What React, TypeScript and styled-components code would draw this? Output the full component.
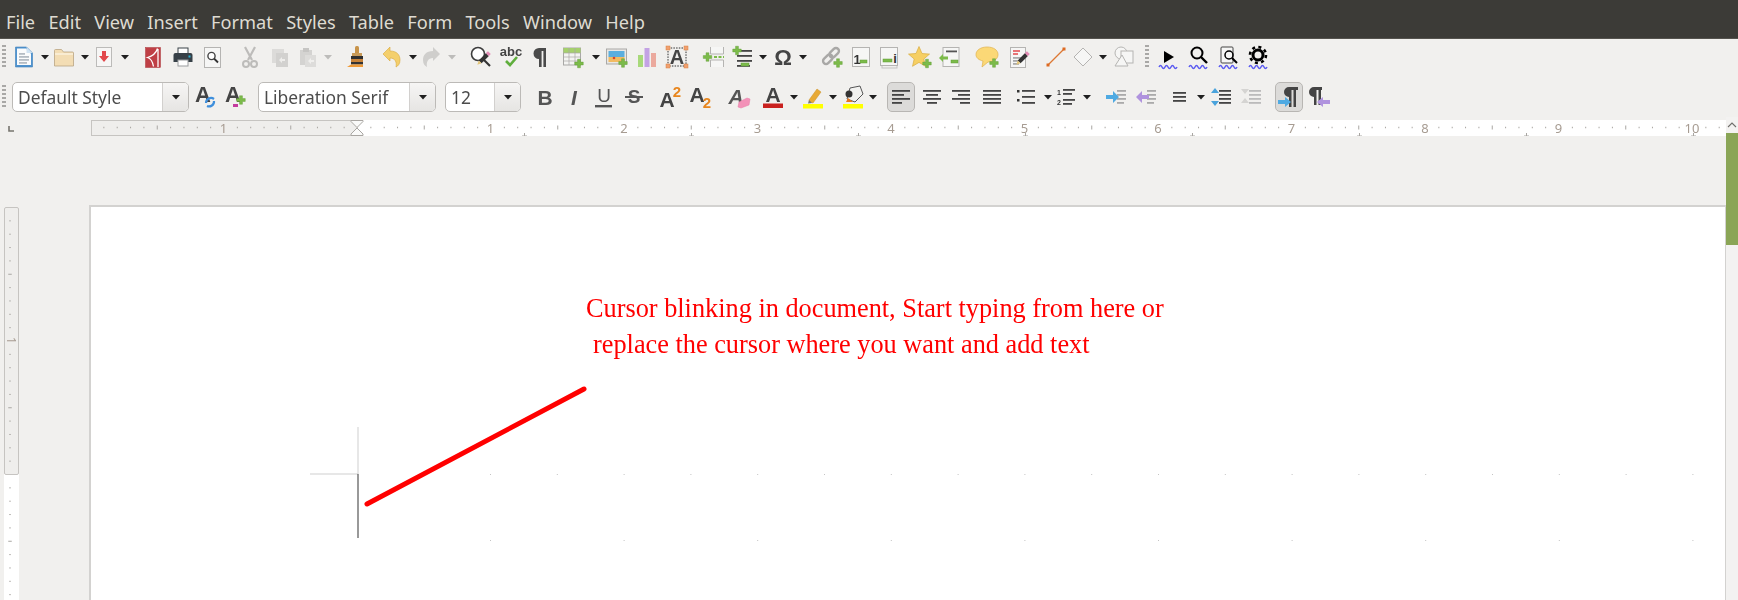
import React from 'react'
import styled, { createGlobalStyle } from 'styled-components'

const GlobalStyle = createGlobalStyle`
  html, body {
    margin: 0;
    padding: 0;
    background: #f1f0ee;
  }
`

const Window = styled.div`
  width: 1738px;
  height: 600px;
  overflow: hidden;
  display: flex;
  flex-direction: column;
  font-family: 'Noto Sans', sans-serif;
  filter: blur(0.4px);
`

const MenuBar = styled.div`
  height: 39px;
  flex: none;
  display: flex;
  align-items: center;
  padding: 5px 0 0 6px;
  box-sizing: border-box;
  background: #3c3b37;
  border-bottom: 1px solid #55534e;
`

const MenuItem = styled.span<{ $ml: number }>`
  margin-left: ${({ $ml }) => $ml}px;
  font-size: 18.2px;
  color: #dfdbd2;
`

const Toolbar = styled.div<{ $h: number; $pt?: number }>`
  height: ${({ $h }) => $h}px;
  padding-top: ${({ $pt }) => $pt || 0}px;
  box-sizing: border-box;
  flex: none;
  display: flex;
  align-items: center;
`

const Slot = styled.div<{ $ml: number; $w: number; $active?: boolean }>`
  flex: none;
  box-sizing: border-box;
  margin-left: ${({ $ml }) => $ml}px;
  width: ${({ $w }) => $w}px;
  height: ${({ $active }) => ($active ? '30px' : 'auto')};
  display: flex;
  align-items: center;
  justify-content: center;
  border-radius: 5px;
  background: ${({ $active }) => ($active ? '#dcdbd9' : 'transparent')};
  border: ${({ $active }) => ($active ? '1px solid #b8b6b3' : 'none')};
`

const Handle = styled.div<{ $h: number }>`
  width: 4px;
  height: ${({ $h }) => $h}px;
  background: repeating-linear-gradient(#a9a8a6 0 2px, transparent 2px 4px);
`

const Combo = styled.div`
  flex: 1;
  height: 30px;
  box-sizing: border-box;
  display: flex;
  background: #fff;
  border: 1px solid #bcbab7;
  border-radius: 5px;
  overflow: hidden;
`

const ComboText = styled.div`
  flex: 1;
  padding-left: 5px;
  font-size: 17.4px;
  line-height: 28px;
  color: #4c4c4c;
  white-space: nowrap;
`

const ComboButton = styled.div`
  width: 25px;
  flex: none;
  display: flex;
  align-items: center;
  justify-content: center;
  border-left: 1px solid #d2d0ce;
  background: linear-gradient(#f6f5f4, #e6e5e3);
`

const Main = styled.div`
  flex: 1;
  min-height: 0;
  display: flex;
`

const Content = styled.div`
  width: 1726px;
  flex: none;
  padding-top: 3px;
  box-sizing: border-box;
  display: flex;
  flex-direction: column;
`

const RulerRow = styled.div`
  height: 16px;
  flex: none;
  display: flex;
  align-items: flex-start;
  padding-left: 8px;
`

const Workspace = styled.div`
  flex: 1;
  min-height: 0;
  display: flex;
  align-items: flex-start;
  padding: 69px 0 0 4px;
  overflow: hidden;
`

const VRuler = styled.svg`
  flex: none;
  margin-top: 2px;
  display: block;
`

const Page = styled.div`
  position: relative;
  flex: 1;
  margin-left: 70px;
  height: 395px;
  box-sizing: border-box;
  padding: 84px 0 0 495px;
  background: #fff;
  border-top: 2px solid #d3d2d0;
  border-left: 2px solid #d3d2d0;
  border-right: 1px solid #d3d2d0;
`

const PageMarks = styled.svg`
  position: absolute;
  top: 0;
  left: 0;
`

const Note = styled.div<{ $indent?: number }>`
  position: relative;
  margin-left: ${({ $indent }) => $indent || 0}px;
  font-family: 'Liberation Serif', serif;
  font-size: 26.3px;
  line-height: 36px;
  color: #ff0000;
  white-space: nowrap;
`

const Scrollbar = styled.div`
  width: 12px;
  flex: none;
  display: flex;
  flex-direction: column;
  background: #f3f2f1;
`

const ScrollUp = styled.div`
  height: 16px;
  display: flex;
  align-items: center;
  justify-content: center;
`

const ScrollThumb = styled.div`
  height: 112px;
  background: #8aa556;
`

const IconSvg = styled.svg`
  display: block;
  overflow: visible;
`

const Icon = ({ children, size = 24 }: { children: React.ReactNode; size?: number }) => (
  <IconSvg width={size} height={size} viewBox="0 0 24 24">
    {children}
  </IconSvg>
)

const Plus = ({ x, y }: { x: number; y: number }) => (
  <path
    transform={`translate(${x} ${y}) scale(.85)`}
    d="M-1.7-5h3.4v3.3H5v3.4H1.7V5h-3.4V1.7H-5v-3.4h3.3z"
    fill="#7cbb4a"
    stroke="#5f9c38"
    strokeWidth=".5"
  />
)

const Minus = ({ x, y, w = 7 }: { x: number; y: number; w?: number }) => (
  <rect x={x} y={y} width={w} height="3" fill="#7cbb4a" stroke="#5f9c38" strokeWidth=".5" />
)

const Glyph = ({
  x,
  y,
  size,
  fill = '#444',
  bold = true,
  italic = false,
  children,
}: {
  x: number
  y: number
  size: number
  fill?: string
  bold?: boolean
  italic?: boolean
  children: React.ReactNode
}) => (
  <text
    x={x}
    y={y}
    fontSize={size}
    fill={fill}
    fontFamily="'Liberation Sans', sans-serif"
    fontWeight={bold ? 700 : 400}
    fontStyle={italic ? 'italic' : 'normal'}
    textAnchor="middle"
  >
    {children}
  </text>
)

const Lines = ({ rows, color = '#444' }: { rows: number[][]; color?: string }) => (
  <g fill={color}>
    {rows.map(([x, y, w], i) => (
      <rect key={i} x={x} y={y} width={w} height="1.8" />
    ))}
  </g>
)

const Wave = () => (
  <path
    d="M3 22q1.5-3 3 0t3 0 3 0 3 0 3 0 3 0"
    fill="none"
    stroke="#5a5af0"
    strokeWidth="1.5"
  />
)

const Pencil = ({ x, y }: { x: number; y: number }) => (
  <g transform={`translate(${x} ${y}) rotate(45)`}>
    <rect x="-2" y="-9" width="4" height="3" fill="#e38bb5" />
    <rect x="-2" y="-6" width="4" height="10" fill="#333" />
    <path d="M-2 4h4L0 8z" fill="#e4c67a" />
  </g>
)

const Arrow = ({ off }: { off?: boolean }) => (
  <svg width="8" height="6" viewBox="0 0 8 6">
    <path d="M0 1h8L4 5.5z" fill={off ? '#bdbcba' : '#1f1f1f'} />
  </svg>
)

const icons: Record<string, React.ReactNode> = {
  newDoc: (
    <>
      <path d="M3.5 2h11l6 6v14h-17z" fill="#4f93cf" stroke="#3f7fb8" strokeWidth=".6" />
      <path d="M5 3.5h9l5 5V20H5z" fill="#fafbfc" />
      <path d="M14.5 2v6h6z" fill="#cfe2f2" />
      <Lines color="#b5bcc4" rows={[[7, 8, 6], [7, 11, 10], [7, 14, 10], [7, 17, 8]]} />
    </>
  ),
  open: (
    <>
      <path d="M2.5 5.5q0-1 1-1h6l2 2.5h9q1 0 1 1V21h-19z" fill="#f3ddb4" stroke="#b9a583" strokeWidth=".8" />
      <path d="M3 9h18" stroke="#fdf6e6" strokeWidth="1.2" />
    </>
  ),
  save: (
    <>
      <rect x="4.5" y="2.5" width="15" height="19" fill="#f7f6f5" stroke="#bcbbb9" />
      <path d="M10 6h4v5h3l-5 6-5-6h3z" fill="#e2484b" />
    </>
  ),
  pdf: (
    <>
      <rect x="4.5" y="2.5" width="15" height="20" fill="#bf3f45" stroke="#a9363b" strokeWidth=".5" />
      <path d="M16.5 3.5c-1.5 5-5 7.5-10 9 3 1 5 3 6 9M17 4v18" fill="none" stroke="#fff" strokeWidth="1.3" />
    </>
  ),
  print: (
    <>
      <rect x="7" y="3" width="10" height="6" fill="#fff" stroke="#3b4349" />
      <path d="M2.5 10q0-2 2-2h15q2 0 2 2v7h-19z" fill="#374047" />
      <rect x="17.5" y="10.5" width="2" height="2" fill="#2bb3d6" />
      <rect x="7" y="15" width="10" height="6" fill="#fff" stroke="#9a9c9e" />
    </>
  ),
  preview: (
    <>
      <rect x="3.5" y="2.5" width="16" height="20" fill="#f6f6f5" stroke="#b5b4b2" />
      <circle cx="10.5" cy="11" r="3.6" fill="#fff" stroke="#444" strokeWidth="1.4" />
      <path d="M13 13.5l4 4" stroke="#333" strokeWidth="1.8" />
    </>
  ),
  cut: (
    <g fill="none" stroke="#bdbcba">
      <path d="M7 2l7 13M17 2l-7 13" strokeWidth="2.2" />
      <circle cx="8" cy="19" r="3" strokeWidth="2" />
      <circle cx="16" cy="19" r="3" strokeWidth="2" />
    </g>
  ),
  copy: (
    <>
      <rect x="4" y="4" width="12" height="14" fill="#dcdbd9" />
      <rect x="8" y="8" width="12" height="14" fill="#d2d1cf" />
      <path d="M11 15l3-3v2h3v2h-3v2z" fill="#eeedeb" />
    </>
  ),
  paste: (
    <>
      <rect x="4" y="5" width="12" height="15" fill="#d4d3d1" />
      <rect x="7" y="3" width="6" height="4" fill="#c6c5c3" />
      <rect x="9" y="10" width="11" height="12" fill="#dddcda" />
      <path d="M12 16l3-3v2h3v2h-3v2z" fill="#f0efed" />
    </>
  ),
  brush: (
    <>
      <rect x="10" y="1" width="4" height="8" rx="1.5" fill="#c8944a" />
      <rect x="7" y="8" width="10" height="3" fill="#c89a58" />
      <rect x="6" y="11" width="12" height="3" fill="#2f2f2f" />
      <rect x="6" y="14" width="12" height="3" fill="#c7833a" />
      <rect x="6" y="17" width="12" height="2.5" fill="#333" />
      <path d="M6 19.5h12v2.5H2z" fill="#ef9a37" />
    </>
  ),
  undo: (
    <path d="M3 9l7-7v4c7 0 10 4 10 9 0 4-2 6-4 7 1-5-1-9-6-9v3z" fill="#f4cf6c" stroke="#d9a83b" strokeWidth=".6" />
  ),
  redo: <path d="M21 9l-7-7v4C7 6 4 10 4 15c0 4 2 6 4 7-1-5 1-9 6-9v3z" fill="#cfcecc" />,
  find: (
    <>
      <circle cx="9" cy="9" r="6.5" fill="#fff" stroke="#3c3c3c" strokeWidth="1.6" />
      <path d="M13 13l8 8" stroke="#333" strokeWidth="2.2" />
      <Pencil x={14} y={14} />
    </>
  ),
  spell: (
    <>
      <Glyph x={12} y={11} size={13}>
        abc
      </Glyph>
      <path d="M7 16l4 4 7-8" fill="none" stroke="#5fae3c" strokeWidth="2.6" />
    </>
  ),
  para: (
    <path d="M17 3H10a5.5 5.5 0 0 0 0 11v8h2.6V6h1.8v16H17z" fill="#4a4a4a" />
  ),
  table: (
    <>
      <rect x="2.5" y="3" width="17" height="17" fill="#f4f4f2" stroke="#a9a8a6" />
      <rect x="2.5" y="3" width="17" height="5" fill="#a5d06c" />
      <path d="M8 3v17M14 3v17M2.5 8h17M2.5 12h17M2.5 16h17" stroke="#a9a8a6" strokeWidth=".7" />
      <Plus x={18} y={18.5} />
    </>
  ),
  image: (
    <>
      <rect x="1.5" y="4" width="20" height="15" fill="#e8e7e5" stroke="#a9a8a6" />
      <rect x="3.5" y="6" width="16" height="6" fill="#5aaede" />
      <rect x="3.5" y="12" width="16" height="5" fill="#f2bb62" />
      <circle cx="9" cy="13" r="1.3" fill="#d8452e" />
      <Plus x={18} y={18} />
    </>
  ),
  chart: (
    <>
      <rect x="3" y="10" width="5" height="12" fill="#a8d97a" />
      <rect x="9.5" y="3" width="5" height="19" fill="#c3a2e4" />
      <rect x="16" y="8" width="5" height="14" fill="#eba99d" />
    </>
  ),
  textbox: (
    <>
      <rect x="3" y="3" width="18" height="18" fill="none" stroke="#333" strokeDasharray="1.5 1.2" />
      <Glyph x={12} y={19} size={20}>
        A
      </Glyph>
      <g fill="#f0a070" stroke="#d98040" strokeWidth=".5">
        <rect x="1" y="1" width="4" height="4" />
        <rect x="19" y="1" width="4" height="4" />
        <rect x="1" y="19" width="4" height="4" />
        <rect x="19" y="19" width="4" height="4" />
      </g>
    </>
  ),
  pageBreak: (
    <>
      <path d="M8.5 2v7h13V2M8.5 22v-7h13v7" fill="#f6f6f5" stroke="#b5b4b2" />
      <path d="M12 12h10" stroke="#7cbb4a" strokeWidth="2" strokeDasharray="3 1.5" />
      <Plus x={5.5} y={12} />
    </>
  ),
  field: (
    <>
      <Lines rows={[[6, 5, 15], [6, 10, 15], [6, 15, 15], [6, 20, 13]]} />
      <Plus x={6} y={5.5} />
      <Minus x={10} y={18} w={8} />
    </>
  ),
  omega: (
    <Glyph x={12} y={20} size={22}>
      Ω
    </Glyph>
  ),
  link: (
    <>
      <g fill="none" stroke="#a9a8a6" strokeWidth="2.4" transform="rotate(-45 11 11)">
        <rect x="1" y="8" width="11" height="6" rx="3" />
        <rect x="10" y="8" width="11" height="6" rx="3" />
      </g>
      <Plus x={18} y={18} />
    </>
  ),
  footnote: (
    <>
      <rect x="3.5" y="2.5" width="17" height="19" fill="#f6f6f5" stroke="#b5b4b2" />
      <Glyph x={8} y={19} size={13} fill="#333">
        1
      </Glyph>
      <Minus x={11} y={15} />
    </>
  ),
  endnote: (
    <>
      <rect x="3" y="5" width="15" height="18" fill="#f0efed" stroke="#c4c3c1" />
      <rect x="1.5" y="2.5" width="17" height="18" fill="#f6f6f5" stroke="#b5b4b2" />
      <Minus x={4} y={14} w={9} />
      <Glyph x={16} y={18} size={13} fill="#333">
        i
      </Glyph>
    </>
  ),
  bookmark: (
    <>
      <path d="M10 1.5l3 7 7.5.6-5.7 4.9 1.7 7.3-6.5-3.9-6.5 3.9 1.7-7.3-5.7-4.9 7.5-.6z" fill="#f6cf63" stroke="#d9ac3d" strokeWidth=".7" />
      <Plus x={18} y={18.5} />
    </>
  ),
  crossRef: (
    <>
      <rect x="5" y="2.5" width="16" height="19" fill="#f6f6f5" stroke="#b5b4b2" />
      <rect x="8" y="5.5" width="11" height="1.8" fill="#555" />
      <path d="M1 13l4-4v2.5h5v3H5V17z" fill="#7cbb4a" />
      <Minus x={13} y={15} />
    </>
  ),
  comment: (
    <>
      <path d="M11 2c6.5 0 11 3 11 7.5S18 17 12 17l-6 5 1-6C3 15 0 13 0 9.500 0 5 5 2 11 2z" fill="#fbd876" stroke="#dfb04a" strokeWidth=".7" />
      <Plus x={18} y={18} />
    </>
  ),
  track: (
    <>
      <rect x="3.5" y="2.5" width="15" height="20" fill="#f6f6f5" stroke="#b5b4b2" />
      <path d="M6 6h7M6 9h5" stroke="#e2484b" strokeWidth="1.5" />
      <Lines color="#aaa" rows={[[6, 12, 9], [6, 15, 7], [6, 18, 6]]} />
      <Pencil x={15} y={14} />
    </>
  ),
  line: (
    <>
      <path d="M4 20L20 4" stroke="#dd7733" strokeWidth="1.3" />
      <rect x="2.500" y="18.5" width="3" height="3" fill="#dd6a22" />
      <rect x="18.5" y="2.5" width="3" height="3" fill="#dd6a22" />
    </>
  ),
  diamond: <path d="M12 3l9 9-9 9-9-9z" fill="#f6f6f5" stroke="#b5b4b2" />,
  shapes: (
    <>
      <circle cx="9" cy="8" r="6" fill="#f6f6f5" stroke="#b5b4b2" />
      <rect x="9" y="6" width="12" height="12" fill="#f6f6f5" stroke="#b5b4b2" />
      <path d="M10 10l6 11H3z" fill="#f6f6f5" stroke="#b5b4b2" />
    </>
  ),
  play: (
    <>
      <path d="M8 6l10 6-10 6z" fill="#000" />
      <Wave />
    </>
  ),
  search: (
    <>
      <circle cx="11" cy="8" r="5.5" fill="none" stroke="#000" strokeWidth="2" />
      <path d="M15 12l6 6" stroke="#000" strokeWidth="2.4" />
      <Wave />
    </>
  ),
  docSearch: (
    <>
      <rect x="5" y="2" width="12" height="16" rx="1" fill="#f6f6f5" stroke="#444" />
      <circle cx="13" cy="10" r="4" fill="none" stroke="#000" strokeWidth="1.5" />
      <path d="M16 13l5 5" stroke="#000" strokeWidth="2" />
      <Wave />
    </>
  ),
  gear: (
    <>
      <circle cx="12" cy="10" r="5" fill="none" stroke="#000" strokeWidth="3" />
      <circle cx="12" cy="10" r="8" fill="none" stroke="#000" strokeWidth="2.6" strokeDasharray="3 3.3" />
      <Wave />
    </>
  ),
  styleUpdate: (
    <>
      <Glyph x={9} y={17} size={22}>
        A
      </Glyph>
      <path d="M12 18a5 5 0 0 1 8-4M20 16a5 5 0 0 1-7 5" fill="none" stroke="#3f8fdc" strokeWidth="2.2" />
    </>
  ),
  styleNew: (
    <>
      <Glyph x={9} y={17} size={22}>
        A
      </Glyph>
      <rect x="9" y="19" width="5" height="3" fill="#c43b9e" />
      <Plus x={17} y={15} />
    </>
  ),
  bold: (
    <Glyph x={12} y={19.500} size={21} fill="#555">
      B
    </Glyph>
  ),
  italic: (
    <Glyph x={12} y={19.500} size={21} fill="#555" italic>
      I
    </Glyph>
  ),
  underline: (
    <>
      <Glyph x={12} y={17} size={19} fill="#555" bold={false}>
        U
      </Glyph>
      <rect x="3" y="20" width="17" height="2.4" fill="#555" />
    </>
  ),
  strike: (
    <>
      <Glyph x={12} y={18} size={19} fill="#555">
        S
      </Glyph>
      <rect x="3" y="11" width="18" height="2" fill="#555" />
    </>
  ),
  sup: (
    <>
      <Glyph x={9} y={22} size={21}>
        A
      </Glyph>
      <Glyph x={19} y={12} size={15} fill="#e8861e">
        2
      </Glyph>
    </>
  ),
  sub: (
    <>
      <Glyph x={9} y={17} size={21}>
        A
      </Glyph>
      <Glyph x={19} y={23} size={15} fill="#e8861e">
        2
      </Glyph>
    </>
  ),
  clear: (
    <>
      <Glyph x={9} y={19} size={21} fill="#555" italic>
        A
      </Glyph>
      <path d="M12 17l8-4 3 1-1 6-8 3-3-1z" fill="#f392b8" stroke="#e678a4" strokeWidth=".5" />
    </>
  ),
  fontColor: (
    <>
      <Glyph x={12} y={17} size={21}>
        A
      </Glyph>
      <rect x="2" y="18.5" width="20" height="4.5" fill="#c9211e" />
    </>
  ),
  highlight: (
    <>
      <path d="M8 15L16 4l4 3-8 11-3-1z" fill="#e8aa36" stroke="#c98f24" strokeWidth=".5" />
      <path d="M8 15l3 3-4 .5z" fill="#777" />
      <rect x="2" y="19" width="20" height="4.500" fill="#ffff00" />
    </>
  ),
  paraColor: (
    <>
      <path d="M9 3l10-2 3 8-8 8-8-3z" fill="#f2f2f0" stroke="#555" />
      <circle cx="8" cy="9" r="3.5" fill="#333" />
      <path d="M7 13l5 4H5z" fill="#e8761e" />
      <rect x="2" y="19" width="20" height="4.500" fill="#ffff00" />
    </>
  ),
  alignLeft: <Lines rows={[[3, 5, 18], [3, 9, 12], [3, 13, 18], [3, 17, 10]]} />,
  alignCenter: <Lines rows={[[3, 5, 18], [6, 9, 12], [3, 13, 18], [7, 17, 10]]} />,
  alignRight: <Lines rows={[[3, 5, 18], [9, 9, 12], [3, 13, 18], [11, 17, 10]]} />,
  justify: <Lines rows={[[3, 5, 18], [3, 9, 18], [3, 13, 18], [3, 17, 18]]} />,
  bullets: (
    <>
      <Lines rows={[[8, 5, 13], [8, 11, 13], [8, 17, 13]]} />
      <rect x="3" y="5" width="2.500" height="2.500" fill="#333" />
      <rect x="3" y="14" width="2.500" height="2.500" fill="#333" />
    </>
  ),
  numbers: (
    <>
      <Lines rows={[[9, 4, 12], [9, 8, 9], [9, 14, 12], [9, 18, 9]]} />
      <Glyph x={5} y={10} size={7} fill="#333">
        1
      </Glyph>
      <Glyph x={5} y={20} size={7} fill="#333">
        2
      </Glyph>
    </>
  ),
  indentMore: (
    <>
      <Lines color="#aaa" rows={[[13, 5, 9], [13, 9, 9], [13, 13, 9], [13, 17, 7]]} />
      <path d="M2 10h7V6l6 6-6 6v-4H2z" fill="#4faae2" />
    </>
  ),
  indentLess: (
    <>
      <Lines color="#aaa" rows={[[13, 5, 9], [13, 9, 9], [13, 13, 9], [13, 17, 7]]} />
      <path d="M15 10H8V6l-6 6 6 6v-4h7z" fill="#b093de" />
    </>
  ),
  lineSpacing: <Lines rows={[[5, 7, 13], [5, 11, 13], [5, 15, 13]]} />,
  paraMore: (
    <>
      <Lines rows={[[10, 5, 12], [10, 9, 12], [10, 13, 12], [10, 17, 12]]} />
      <path d="M6 3l4 5H2zM6 21l-4-5h8z" fill="#4aa3dc" />
    </>
  ),
  paraLess: (
    <>
      <Lines color="#bbb" rows={[[10, 5, 12], [10, 9, 12], [10, 13, 12], [10, 17, 12]]} />
      <path d="M2 4h8L6 9zM6 13l4 5H2z" fill="#d5d4d2" />
    </>
  ),
  ltr: (
    <>
      <path d="M21 2h-9a5 5 0 0 0 0 10v10h2.500V5h2v17H19V5h2z" fill="#444" />
      <path d="M1 15h7v-3l6 5-6 5v-3H1z" fill="#4faae2" />
    </>
  ),
  rtl: (
    <>
      <path d="M14 2H6a5 5 0 0 0 0 10v8h2.500V5h2v15H13V5h1z" fill="#444" />
      <path d="M22 15h-7v-3l-6 5 6 5v-3h7z" fill="#b093de" />
    </>
  ),
}

type Item = {
  at: number
  w?: number
  icon?: string
  arrow?: boolean
  arrowOff?: boolean
  active?: boolean
  handle?: number
  combo?: string
}

// places items left to right so that each one is centred on its "at" value
const ToolRow = ({ items }: { items: Item[] }) => {
  let cursor = 0
  return (
    <>
      {items.map((item, i) => {
        const w = item.w || (item.arrow || item.arrowOff ? 8 : item.handle ? 4 : 24)
        const ml = item.at - w / 2 - cursor
        cursor = item.at + w / 2
        return (
          <Slot key={i} $ml={ml} $w={w} $active={item.active}>
            {item.icon && <Icon>{icons[item.icon]}</Icon>}
            {item.arrow && <Arrow />}
            {item.arrowOff && <Arrow off />}
            {item.handle && <Handle $h={item.handle} />}
            {item.combo !== undefined && (
              <Combo>
                <ComboText>{item.combo}</ComboText>
                <ComboButton>
                  <Arrow />
                </ComboButton>
              </Combo>
            )}
          </Slot>
        )
      })}
    </>
  )
}

const icon = (name: string, at: number): Item => ({ icon: name, at })
const drop = (at: number): Item => ({ arrow: true, at })
const dropOff = (at: number): Item => ({ arrowOff: true, at })

const standardBar: Item[] = [
  { handle: 24, at: 4 },
  icon('newDoc', 24),
  drop(45),
  icon('open', 64),
  drop(85),
  icon('save', 104),
  drop(125),
  icon('pdf', 153),
  icon('print', 183),
  icon('preview', 213),
  icon('cut', 250),
  icon('copy', 280),
  icon('paste', 308),
  dropOff(328),
  icon('brush', 357),
  icon('undo', 392),
  drop(413),
  icon('redo', 431),
  dropOff(452),
  icon('find', 481),
  icon('spell', 511),
  icon('para', 541),
  icon('table', 573),
  drop(596),
  icon('image', 617),
  icon('chart', 647),
  icon('textbox', 677),
  icon('pageBreak', 714),
  icon('field', 743),
  drop(763),
  icon('omega', 783),
  drop(803),
  icon('link', 832),
  icon('footnote', 861),
  icon('endnote', 891),
  icon('bookmark', 921),
  icon('crossRef', 950),
  icon('comment', 988),
  icon('track', 1019),
  icon('line', 1056),
  icon('diamond', 1083),
  drop(1103),
  icon('shapes', 1124),
  { handle: 24, at: 1147 },
  icon('play', 1168),
  icon('search', 1198),
  icon('docSearch', 1228),
  icon('gear', 1258),
]

const formatBar: Item[] = [
  { handle: 24, at: 4 },
  { combo: 'Default Style', at: 100.5, w: 177 },
  icon('styleUpdate', 206),
  icon('styleNew', 236),
  { combo: 'Liberation Serif', at: 347, w: 178 },
  { combo: '12', at: 483, w: 76 },
  icon('bold', 545),
  icon('italic', 574),
  icon('underline', 604),
  icon('strike', 634),
  icon('sup', 670),
  icon('sub', 700),
  icon('clear', 739),
  icon('fontColor', 773),
  drop(794),
  icon('highlight', 813),
  drop(833),
  icon('paraColor', 853),
  drop(873),
  { icon: 'alignLeft', at: 901, w: 28, active: true },
  icon('alignCenter', 932),
  icon('alignRight', 961),
  icon('justify', 992),
  icon('bullets', 1026),
  drop(1048),
  icon('numbers', 1066),
  drop(1087),
  icon('indentMore', 1116),
  icon('indentLess', 1146),
  icon('lineSpacing', 1180),
  drop(1201),
  icon('paraMore', 1221),
  icon('paraLess', 1251),
  { icon: 'ltr', at: 1288.5, w: 28, active: true },
  icon('rtl', 1320),
]

const menus: [string, number][] = [
  ['File', 0],
  ['Edit', 13.3],
  ['View', 13.3],
  ['Insert', 13.3],
  ['Format', 13.3],
  ['Styles', 13.3],
  ['Table', 13.3],
  ['Form', 13.3],
  ['Tools', 13.3],
  ['Window', 13.3],
  ['Help', 13.3],
]

const RULER_ORIGIN = 357
const RULER_LEFT = 91
const RULER_RIGHT = 1726
const STEP = 13.35

const rulerText = '#a79c92'

const HRuler = () => {
  const ticks: React.ReactNode[] = []
  for (let i = -19; i * STEP + RULER_ORIGIN < RULER_RIGHT; i++) {
    if (i === 0) continue
    const x = i * STEP + RULER_ORIGIN
    if (i % 10 === 0) {
      ticks.push(
        <text key={i} x={x} y={12.5} fontSize="13" fill={rulerText} textAnchor="middle" fontFamily="'Noto Sans', sans-serif">
          {Math.abs(i / 10)}
        </text>
      )
    } else {
      const h = i % 5 === 0 ? 4 : 1.5
      ticks.push(<rect key={i} x={x} y={7.5 - h / 2} width="1" height={h} fill="#a9a6a2" />)
    }
  }
  const tabs = []
  for (let x = RULER_ORIGIN + 167; x < RULER_RIGHT; x += 167) {
    tabs.push(<path key={x} d={`M${x - 2} 16h5M${x + 0.5} 13v3`} stroke="#a9a6a2" strokeWidth="1" />)
  }
  return (
    <svg width={RULER_RIGHT} height="16" viewBox={`0 0 ${RULER_RIGHT} 16`} style={{ display: 'block', marginLeft: -14 }}>
      <rect x={RULER_ORIGIN} y="0" width={RULER_RIGHT - RULER_ORIGIN} height="16" fill="#fff" />
      <rect x={RULER_LEFT + 0.5} y="0.5" width={RULER_ORIGIN - RULER_LEFT} height="15" fill="#efeeec" stroke="#c6c4c1" />
      {ticks}
      {tabs}
      <path
        d={`M${RULER_ORIGIN - 6} 0.5h12v1L${RULER_ORIGIN} 7.5 ${RULER_ORIGIN - 6} 1.5zM${RULER_ORIGIN} 8l6 6v1.5h-12V14z`}
        fill="#fafaf9"
        stroke="#a9a6a2"
      />
    </svg>
  )
}

const SideRuler = () => {
  const ticks: React.ReactNode[] = []
  const origin = 267
  for (let i = -19; i * STEP + origin < 395; i++) {
    if (i === 0) continue
    const y = i * STEP + origin
    if (i % 10 === 0) {
      ticks.push(
        <text key={i} x={y} y={-3} fontSize="12" fill={rulerText} textAnchor="middle" transform="rotate(90)" fontFamily="'Noto Sans', sans-serif">
          1
        </text>
      )
    } else {
      const w = i % 5 === 0 ? 3.5 : 1.5
      ticks.push(<rect key={i} x={6 - w / 2} y={y} width={w} height="1" fill="#a9a6a2" />)
    }
  }
  return (
    <VRuler width="15" height="395" viewBox="0 0 15 395">
      <rect x="0" y={origin} width="15" height={395 - origin} fill="#fff" />
      <rect x="0.5" y="0.5" width="14" height={origin} rx="1.5" fill="#efeeec" stroke="#c6c4c1" />
      {ticks}
    </VRuler>
  )
}

// page coordinates: the padding box of Page begins at 91,207 on the screen
const PX = 91
const PY = 207

const Marks = () => {
  const dots: React.ReactNode[] = []
  for (let c = 0; c < 19; c++) {
    const x = 490 + c * 66.8 - PX
    dots.push(<rect key={`a${c}`} x={x} y={474 - PY} width="1" height="1" fill="#c4c4c4" />)
    if (c % 2 === 0) dots.push(<rect key={`b${c}`} x={x} y={540 - PY} width="1" height="1" fill="#c4c4c4" />)
  }
  return (
    <PageMarks width="1635" height="393" viewBox="0 0 1635 393">
      {dots}
      <path d={`M${358 - PX} ${427 - PY}V${474 - PY}H${310 - PX}`} fill="none" stroke="#cfcfcf" />
      <path d={`M${358 - PX} ${474 - PY}V${538 - PY}`} stroke="#555" strokeWidth="1.2" />
      <path d={`M${367 - PX} ${504 - PY}L${584 - PX} ${389 - PY}`} stroke="#ff0000" strokeWidth="5" strokeLinecap="round" />
    </PageMarks>
  )
}

const App = () => (
  <Window>
    <GlobalStyle />
    <MenuBar>
      {menus.map(([label, ml]) => (
        <MenuItem key={label} $ml={ml}>
          {label}
        </MenuItem>
      ))}
    </MenuBar>
    <Toolbar $h={36}>
      <ToolRow items={standardBar} />
    </Toolbar>
    <Toolbar $h={42} $pt={2}>
      <ToolRow items={formatBar} />
    </Toolbar>
    <Main>
      <Content>
        <RulerRow>
          <svg width="6" height="16" viewBox="0 0 6 16" style={{ flex: 'none' }}>
            <path d="M1 6v5h5" fill="none" stroke="#77756f" strokeWidth="1.6" />
          </svg>
          <HRuler />
        </RulerRow>
        <Workspace>
          <SideRuler />
          <Page>
            <Marks />
            <Note>Cursor blinking in document, Start typing from here or</Note>
            <Note $indent={7}>replace the cursor where you want and add text</Note>
          </Page>
        </Workspace>
      </Content>
      <Scrollbar>
        <ScrollUp>
          <svg width="10" height="6" viewBox="0 0 10 6">
            <path d="M1 5l4-4 4 4" fill="none" stroke="#6f6e6b" strokeWidth="1.1" />
          </svg>
        </ScrollUp>
        <ScrollThumb />
      </Scrollbar>
    </Main>
  </Window>
)

export default App
